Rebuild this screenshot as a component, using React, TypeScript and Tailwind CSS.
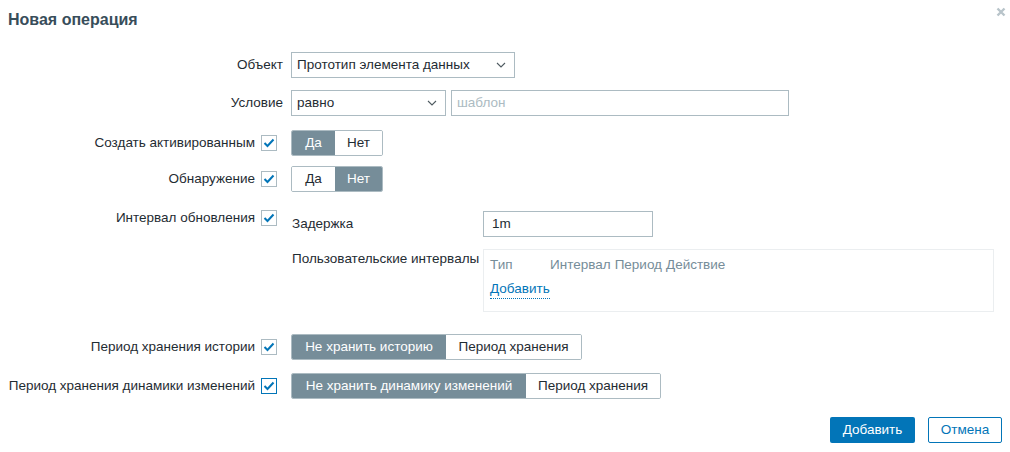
import React from "react";

const font = { fontFamily: '"Liberation Sans", Arial, sans-serif' };

function Check({ focused = false }: { focused?: boolean }) {
  return (
    <span
      className={`ml-[6px] mr-[6px] inline-flex h-4 w-4 shrink-0 items-center justify-center border bg-white ${
        focused ? "border-[#0275b8]" : "border-[#acbbc2]"
      }`}
    >
      <svg width="12" height="10" viewBox="0 0 12 10" fill="none">
        <path d="M1.5 5l3 3 6-6.5" stroke="#0275b8" strokeWidth="2" />
      </svg>
    </span>
  );
}

function Chevron() {
  return (
    <svg width="10" height="6" viewBox="0 0 10 6" fill="none" className="shrink-0">
      <path d="M1 1l4 4 4-4" stroke="#4f5b61" strokeWidth="1.1" />
    </svg>
  );
}

function Select({ value, width }: { value: string; width: string }) {
  return (
    <div
      className={`flex h-[26px] ${width} items-center justify-between border border-[#acbbc2] bg-white pl-[5px] pr-[8px] text-[#1f2c33]`}
    >
      <span>{value}</span>
      <Chevron />
    </div>
  );
}

function Segmented({ items, active }: { items: [string, string][]; active: number }) {
  return (
    <div className="flex h-[26px] overflow-hidden rounded-[2px] border border-[#acbbc2]">
      {items.map(([label, w], i) => (
        <div
          key={label}
          className={`flex items-center justify-center ${w} ${
            i === active ? "bg-[#768d99] text-white" : "bg-white text-[#1f2c33]"
          }`}
        >
          {label}
        </div>
      ))}
    </div>
  );
}

function Row({
  label,
  check,
  focused,
  className = "",
  children,
}: {
  label: string;
  check?: boolean;
  focused?: boolean;
  className?: string;
  children: React.ReactNode;
}) {
  return (
    <div className={`flex ${className}`}>
      <div className="flex h-[26px] w-[283px] shrink-0 items-center justify-end text-[#1f2c33]">
        <span>{label}</span>
        {check && <Check focused={focused} />}
      </div>
      <div className="ml-2 flex-1">{children}</div>
    </div>
  );
}

export default function App() {
  return (
    <div style={font} className="h-[452px] w-[1010px] bg-white text-[13.5px] leading-none">
      <div className="flex h-[40px] items-center justify-between pl-2 pr-[4px]">
        <h1 className="text-[16px] font-bold text-[#384d5a]">Новая операция</h1>
        <svg width="10" height="10" viewBox="0 0 10 10" className="mb-[16px]">
          <path d="M1.5 1.5l7 7M8.5 1.5l-7 7" stroke="#b8c4ca" strokeWidth="2.4" />
        </svg>
      </div>

      <div className="mt-[12px] flex flex-col">
        <Row label="Объект">
          <Select value="Прототип элемента данных" width="w-[224px]" />
        </Row>
        <Row label="Условие" className="mt-[12px]">
          <div className="flex gap-[5px]">
            <Select value="равно" width="w-[155px]" />
            <div className="flex h-[26px] w-[338px] items-center border border-[#acbbc2] px-[5px] text-[#acbbc2]">
              шаблон
            </div>
          </div>
        </Row>
        <Row label="Создать активированным" check className="mt-[14px]">
          <div className="flex">
            <Segmented items={[["Да", "w-[43px]"], ["Нет", "w-[47px]"]]} active={0} />
          </div>
        </Row>
        <Row label="Обнаружение" check className="mt-[10px]">
          <div className="flex">
            <Segmented items={[["Да", "w-[43px]"], ["Нет", "w-[47px]"]]} active={1} />
          </div>
        </Row>
        <div className="mt-[17px] flex">
          <div className="flex h-[18px] w-[283px] shrink-0 items-center justify-end text-[#1f2c33]">
            <span>Интервал обновления</span>
            <Check />
          </div>
          <div className="ml-2 flex-1 text-[#1f2c33]">
            <div className="flex">
              <div className="w-[192px] pl-[1px] pt-[8px]">Задержка</div>
              <div className="mt-[2px] flex h-[26px] w-[170px] items-center border border-[#acbbc2] px-[8px]">
                1m
              </div>
            </div>
            <div className="mt-[12px] flex">
              <div className="w-[192px] pl-[1px] pt-[3px]">Пользовательские интервалы</div>
              <div className="h-[63px] w-[511px] border border-[#ebeef0] px-[6px] pt-[8px]">
                <div className="flex text-[#768d99]">
                  <span className="w-[60px]">Тип</span>
                  <span className="mr-[4px]">Интервал</span>
                  <span className="mr-[4px]">Период</span>
                  <span>Действие</span>
                </div>
                <div className="mt-[10px]">
                  <span className="border-b border-dotted border-[#0275b8] pb-[2px] text-[#0275b8]">
                    Добавить
                  </span>
                </div>
              </div>
            </div>
          </div>
        </div>
        <Row label="Период хранения истории" check className="mt-[22px]">
          <div className="flex">
            <Segmented
              items={[["Не хранить историю", "w-[154px]"], ["Период хранения", "w-[135px]"]]}
              active={0}
            />
          </div>
        </Row>
        <Row label="Период хранения динамики изменений" check focused className="mt-[13px]">
          <div className="flex">
            <Segmented
              items={[["Не хранить динамику изменений", "w-[234px]"], ["Период хранения", "w-[134px]"]]}
              active={0}
            />
          </div>
        </Row>
      </div>

      <div className="mt-[18px] flex justify-end gap-[13px] pr-[8px]">
        <div className="flex h-[26px] w-[85px] items-center justify-center rounded-[2px] bg-[#0275b8] text-white">
          Добавить
        </div>
        <div className="flex h-[26px] w-[74px] items-center justify-center rounded-[2px] border border-[#0275b8] text-[#0275b8]">
          Отмена
        </div>
      </div>
    </div>
  );
}
